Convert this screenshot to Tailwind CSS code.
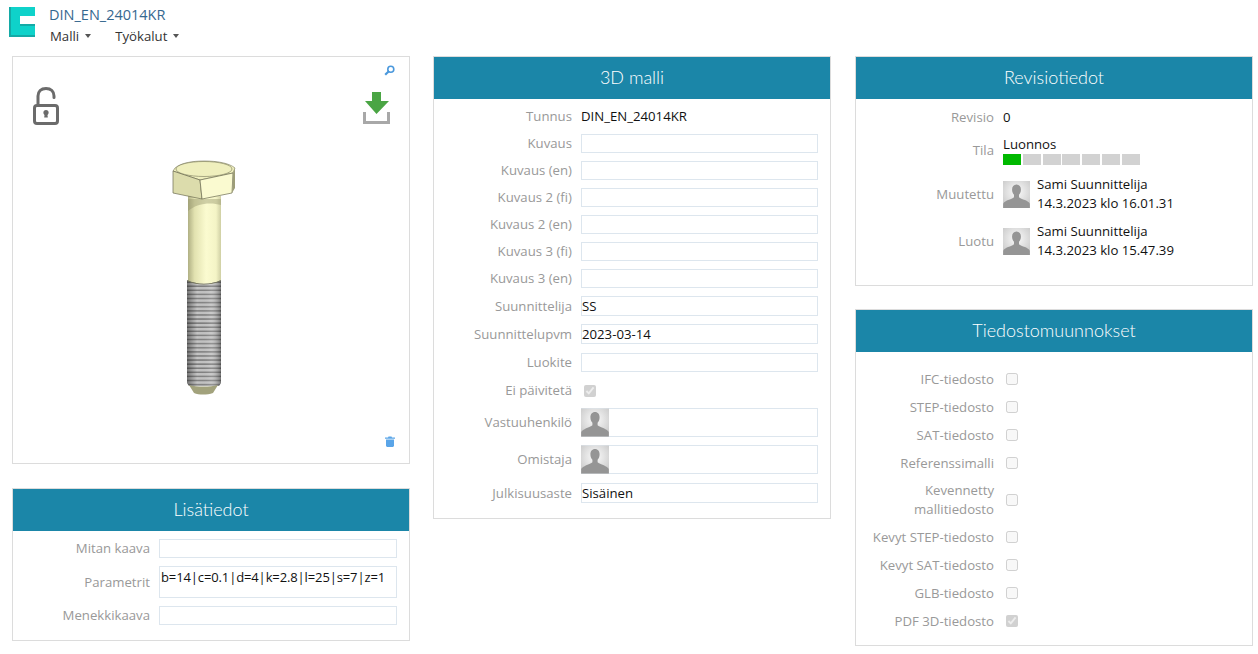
<!DOCTYPE html>
<html lang="en">
<head>
    <meta charset="UTF-8">
    <title>DIN_EN_24014KR</title>
    <script src="https://cdn.jsdelivr.net/npm/@tailwindcss/browser@4"></script>
</head>
<body class="bg-white text-[13.2px] leading-[19px] text-[#111] font-['Open_Sans',sans-serif] overflow-hidden">

    <svg class="absolute w-0 h-0">
        <defs>
            <radialGradient id="avatarBg" cx="50%" cy="40%" r="75%">
                <stop offset="0" stop-color="#fbfbfb"/>
                <stop offset="1" stop-color="#c4c4c4"/>
            </radialGradient>
            <symbol id="avatar" viewBox="0 0 28 28">
                <rect width="28" height="28" fill="url(#avatarBg)"/>
                <path d="M14 3.500c-3 0-4.600 2.300-4.600 5.200 0 2.400.8 4.300 2 5.600v2.500c-1 1.200-3.600 2-6.200 3C2.800 21 1 22 .2 23.500V28h27.600v-4.500C27 22 25.200 21 22.800 19.800c-2.600-1-5.200-1.800-6.200-3v-2.500c1.200-1.300 2-3.200 2-5.600 0-2.900-1.600-5.200-4.600-5.200z" fill="#959595"/>
            </symbol>
        </defs>
    </svg>

    <header class="h-[56px] flex items-start pl-[9px] pt-[7px]">
        <svg class="w-[26px] h-[30px] shrink-0" viewBox="0 0 26 30">
            <path d="M0 0h26v9H11v10h15v11H0z" fill="#0fd2ca"/>
            <path d="M0 0h2v28h24v2H0zM11 17v2h15v-2z" fill="#14aaa6"/>
        </svg>
        <div class="ml-[14px] -mt-[1px]">
            <div class="text-[14.500px] leading-[18px] text-[#35688f]">DIN_EN_24014KR</div>
            <nav class="flex gap-[24px] mt-[3px] ml-[1px] leading-[18px] text-[#333]">
                <span class="flex items-center gap-[6px]">Malli <i class="w-0 h-0 border-x-[3.500px] border-x-transparent border-t-[4px] border-t-[#555]"></i></span>
                <span class="flex items-center gap-[6px]">Työkalut <i class="w-0 h-0 border-x-[3.500px] border-x-transparent border-t-[4px] border-t-[#555]"></i></span>
            </nav>
        </div>
    </header>

    <main class="grid grid-cols-[398px_398px_398px] gap-x-[23px] pl-[12px] items-start">

        <!-- vasen sarake -->
        <div class="flex flex-col gap-[24px]">
            <section class="relative h-[408px] border border-[#dcdcdc]">
                <svg class="absolute left-[371px] top-[8px] w-[11px] h-[11px]" viewBox="0 0 11 11">
                    <circle cx="6.800" cy="4.200" r="3" fill="none" stroke="#4a98dc" stroke-width="1.600"/>
                    <path d="M4.800 6.200L1.200 9.800" stroke="#4a98dc" stroke-width="2.200"/>
                </svg>
                <svg class="absolute left-[19px] top-[30px] w-[28px] h-[39px]" viewBox="0 0 28 39">
                    <path d="M6 17V9C6 4.500 9 1.500 14 1.500S22 4.500 22 9v1.500" fill="none" stroke="#6b6b6b" stroke-width="3" stroke-linecap="round"/>
                    <rect x="2.500" y="18.500" width="23" height="18" rx="2.500" fill="none" stroke="#6b6b6b" stroke-width="3"/>
                    <circle cx="14" cy="25.500" r="2.600" fill="#6b6b6b"/>
                    <path d="M12.800 26h2.400l.6 4.500h-3.600z" fill="#6b6b6b"/>
                </svg>
                <svg class="absolute left-[350px] top-[34px] w-[27px] h-[33px]" viewBox="0 0 27 33">
                    <path d="M1.500 21v10.500h24V21" fill="none" stroke="#a8a8a8" stroke-width="3"/>
                    <path d="M9 1h9v9h8L13.500 23 2 10h7z" fill="#4aa544"/>
                </svg>

                <svg class="absolute left-[142px] top-[99px] w-[100px] h-[245px]" viewBox="155 156 100 245">
                    <defs>
                        <linearGradient id="shank" x1="0" x2="1" y1="0" y2="0">
                            <stop offset="0" stop-color="#b0b084"/>
                            <stop offset=".2" stop-color="#e2e2b0"/>
                            <stop offset=".55" stop-color="#fbfbd0"/>
                            <stop offset=".85" stop-color="#f4f4c6"/>
                            <stop offset="1" stop-color="#cfcfa4"/>
                        </linearGradient>
                        <linearGradient id="threadShade" x1="0" x2="1" y1="0" y2="0">
                            <stop offset="0" stop-color="#000" stop-opacity=".4"/>
                            <stop offset=".3" stop-color="#000" stop-opacity="0"/>
                            <stop offset=".7" stop-color="#fff" stop-opacity=".1"/>
                            <stop offset="1" stop-color="#000" stop-opacity=".4"/>
                        </linearGradient>
                        <pattern id="thread" width="36" height="4.100" patternUnits="userSpaceOnUse">
                            <rect width="36" height="4.100" fill="#c4c4c4"/>
                            <rect y="2.600" width="36" height="1.500" fill="#7e7e7e"/>
                        </pattern>
                    </defs>
                    <rect x="188" y="196" width="33" height="88" fill="url(#shank)"/>
                    <path d="M188 199h33v6c-10-3-24-2-33 6z" fill="#8f8f66" opacity=".4"/>
                    <path d="M187 280c10 5 24 5 34 0v103l-2 3H189l-2-3z" fill="url(#thread)"/>
                    <path d="M187 280c10 5 24 5 34 0v103l-2 3H189l-2-3z" fill="url(#threadShade)"/>
                    <path d="M187 280c10 5 24 5 34 0l-1 1.500c-10 4-23 4-32 0z" fill="#75755a"/>
                    <path d="M189 385c8 2 21 2 29 0l-5 8c-6 2-14 2-19 0z" fill="#a2a27c"/>
                    <path d="M173 171l2-3c6-5 17-7 29-7 13 0 25 2 31 7l-2 5-33 7z" fill="#efefbd" stroke="#77775a" stroke-width=".6"/>
                    <path d="M173 171l27 9 2 19-29-6z" fill="#dcdcac" stroke="#6c6c50" stroke-width=".7"/>
                    <path d="M200 180l33-7-1 20-30 6z" fill="#fafad0" stroke="#6c6c50" stroke-width=".7"/>
                    <path d="M233 173l2-5v20l-3 5z" fill="#9d9d78"/>
                    <ellipse cx="204" cy="169" rx="28" ry="7.500" fill="#efefbd" stroke="#77775a" stroke-width=".6"/>
                </svg>

                <svg class="absolute left-[372px] top-[379px] w-[10px] h-[11px]" viewBox="0 0 10 11">
                    <path d="M3.500.500h3l.5 1h3v1.200H0V1.500h3zM1 3.500h8V10l-1 1H2l-1-1z" fill="#5aa5e8"/>
                </svg>
            </section>

            <section class="border border-[#dcdcdc] h-[153px]">
                <h2 class="h-[42px] pb-[2px] flex items-center justify-center bg-[#1b86a8] text-white text-[18px] font-['Lato',sans-serif] font-light">Lisätiedot</h2>
                <div class="pt-[8px] grid grid-cols-[137px_238px] gap-x-[9px] gap-y-[8px] items-center">
                    <label class="text-right text-[#999]">Mitan kaava</label>
                    <input class="h-[19px] border border-[#dde6ee] px-0 outline-none">
                    <label class="text-right text-[#999]">Parametrit</label>
                    <div class="h-[32px] border border-[#dde6ee] px-[1px] leading-[20px] text-[13px] tracking-[-0.12px]">b=14|c=0.1|d=4|k=2.8|l=25|s=7|z=1</div>
                    <label class="text-right text-[#999]">Menekkikaava</label>
                    <input class="h-[19px] border border-[#dde6ee] px-0 outline-none">
                </div>
            </section>
        </div>

        <!-- keskisarake -->
        <section class="border border-[#dcdcdc] h-[463px]">
            <h2 class="h-[42px] pb-[2px] flex items-center justify-center bg-[#1b86a8] text-white text-[18px] font-['Lato',sans-serif] font-light">3D malli</h2>
            <div class="pt-[7px] grid grid-cols-[138px_237px] gap-x-[9px] gap-y-[8px] items-center">
                <label class="h-[19px] mt-[1px] text-right text-[#999]">Tunnus</label><span class="h-[19px] mt-[1px]">DIN_EN_24014KR</span>
                <label class="text-right text-[#999]">Kuvaus</label><input class="h-[19px] border border-[#dde6ee] px-0 outline-none">
                <label class="text-right text-[#999]">Kuvaus (en)</label><input class="h-[19px] border border-[#dde6ee] px-0 outline-none">
                <label class="text-right text-[#999]">Kuvaus 2 (fi)</label><input class="h-[19px] border border-[#dde6ee] px-0 outline-none">
                <label class="text-right text-[#999]">Kuvaus 2 (en)</label><input class="h-[19px] border border-[#dde6ee] px-0 outline-none">
                <label class="text-right text-[#999]">Kuvaus 3 (fi)</label><input class="h-[19px] border border-[#dde6ee] px-0 outline-none">
                <label class="text-right text-[#999]">Kuvaus 3 (en)</label><input class="h-[19px] border border-[#dde6ee] px-0 outline-none">
                <label class="text-right text-[#999]">Suunnittelija</label><input value="SS" class="h-[20px] border border-[#dde6ee] px-0 outline-none">
                <label class="text-right text-[#999]">Suunnittelupvm</label><input value="2023-03-14" class="h-[20px] border border-[#dde6ee] px-0 outline-none">
                <label class="mt-[1px] text-right text-[#999]">Luokite</label><input class="mt-[1px] h-[19px] border border-[#dde6ee] px-0 outline-none">
                <label class="text-right text-[#999]">Ei päivitetä</label><div class="h-[20px] flex items-center"><input type="checkbox" checked disabled class="size-3 ml-[3px] mt-[1px]"></div>
                <label class="text-right text-[#999]">Vastuuhenkilö</label>
                <div class="h-[29px] border border-[#dde6ee]"><svg class="block -ml-px -mt-px w-[28px] h-[29px]"><use href="#avatar"/></svg></div>
                <label class="text-right text-[#999]">Omistaja</label>
                <div class="h-[29px] border border-[#dde6ee]"><svg class="block -ml-px -mt-px w-[28px] h-[29px]"><use href="#avatar"/></svg></div>
                <label class="mt-[1px] text-right text-[#999]">Julkisuusaste</label><input value="Sisäinen" class="mt-[1px] h-[20px] border border-[#dde6ee] px-0 outline-none">
            </div>
        </section>

        <!-- oikea sarake -->
        <div class="ml-[1px] -mr-[1px] flex flex-col gap-[23px]">
            <section class="border border-[#dcdcdc] h-[230px]">
                <h2 class="h-[42px] pb-[2px] flex items-center justify-center bg-[#1b86a8] text-white text-[18px] font-['Lato',sans-serif] font-light">Revisiotiedot</h2>
                <div class="pt-[9px] grid grid-cols-[138px_auto] gap-x-[9px] gap-y-[8px] items-center">
                    <label class="text-right text-[#999]">Revisio</label><span>0</span>
                    <label class="text-right text-[#999]">Tila</label>
                    <div>
                        <div class="leading-[18px]">Luonnos</div>
                        <div class="flex gap-[1.800px] mt-[1px]">
                            <i class="w-[18px] h-[11px] bg-[#00b900]"></i>
                            <i class="w-[18px] h-[11px] bg-[#d2d2d2]"></i>
                            <i class="w-[18px] h-[11px] bg-[#d2d2d2]"></i>
                            <i class="w-[18px] h-[11px] bg-[#d2d2d2]"></i>
                            <i class="w-[18px] h-[11px] bg-[#d2d2d2]"></i>
                            <i class="w-[18px] h-[11px] bg-[#d2d2d2]"></i>
                            <i class="w-[18px] h-[11px] bg-[#d2d2d2]"></i>
                        </div>
                    </div>
                    <label class="text-right text-[#999] mt-[2px]">Muutettu</label>
                    <div class="flex items-center gap-[7px] mt-[2px]">
                        <svg class="w-[27px] h-[27px]"><use href="#avatar"/></svg>
                        <div>Sami Suunnittelija<br>14.3.2023 klo 16.01.31</div>
                    </div>
                    <label class="text-right text-[#999] mt-[1px]">Luotu</label>
                    <div class="flex items-center gap-[7px] mt-[1px]">
                        <svg class="w-[27px] h-[27px]"><use href="#avatar"/></svg>
                        <div>Sami Suunnittelija<br>14.3.2023 klo 15.47.39</div>
                    </div>
                </div>
            </section>

            <section class="border border-[#dcdcdc] h-[337px]">
                <h2 class="h-[42px] pb-[2px] flex items-center justify-center bg-[#1b86a8] text-white text-[18px] font-['Lato',sans-serif] font-light">Tiedostomuunnokset</h2>
                <div class="pt-[17px] grid grid-cols-[138px_auto] gap-x-[9px] gap-y-[8px] items-center justify-start">
                    <label class="text-right text-[#999] leading-[20px]">IFC-tiedosto</label><input type="checkbox" disabled class="size-3 ml-[3px]">
                    <label class="text-right text-[#999] leading-[20px]">STEP-tiedosto</label><input type="checkbox" disabled class="size-3 ml-[3px]">
                    <label class="text-right text-[#999] leading-[20px]">SAT-tiedosto</label><input type="checkbox" disabled class="size-3 ml-[3px]">
                    <label class="text-right text-[#999] leading-[20px]">Referenssimalli</label><input type="checkbox" disabled class="size-3 ml-[3px]">
                    <label class="text-right text-[#999]">Kevennetty<br>mallitiedosto</label><input type="checkbox" disabled class="size-3 ml-[3px]">
                    <label class="text-right text-[#999] leading-[20px]">Kevyt STEP-tiedosto</label><input type="checkbox" disabled class="size-3 ml-[3px]">
                    <label class="text-right text-[#999] leading-[20px]">Kevyt SAT-tiedosto</label><input type="checkbox" disabled class="size-3 ml-[3px]">
                    <label class="text-right text-[#999] leading-[20px]">GLB-tiedosto</label><input type="checkbox" disabled class="size-3 ml-[3px]">
                    <label class="text-right text-[#999] leading-[20px]">PDF 3D-tiedosto</label><input type="checkbox" checked disabled class="size-3 ml-[3px]">
                </div>
            </section>
        </div>
    </main>
</body>
</html>
